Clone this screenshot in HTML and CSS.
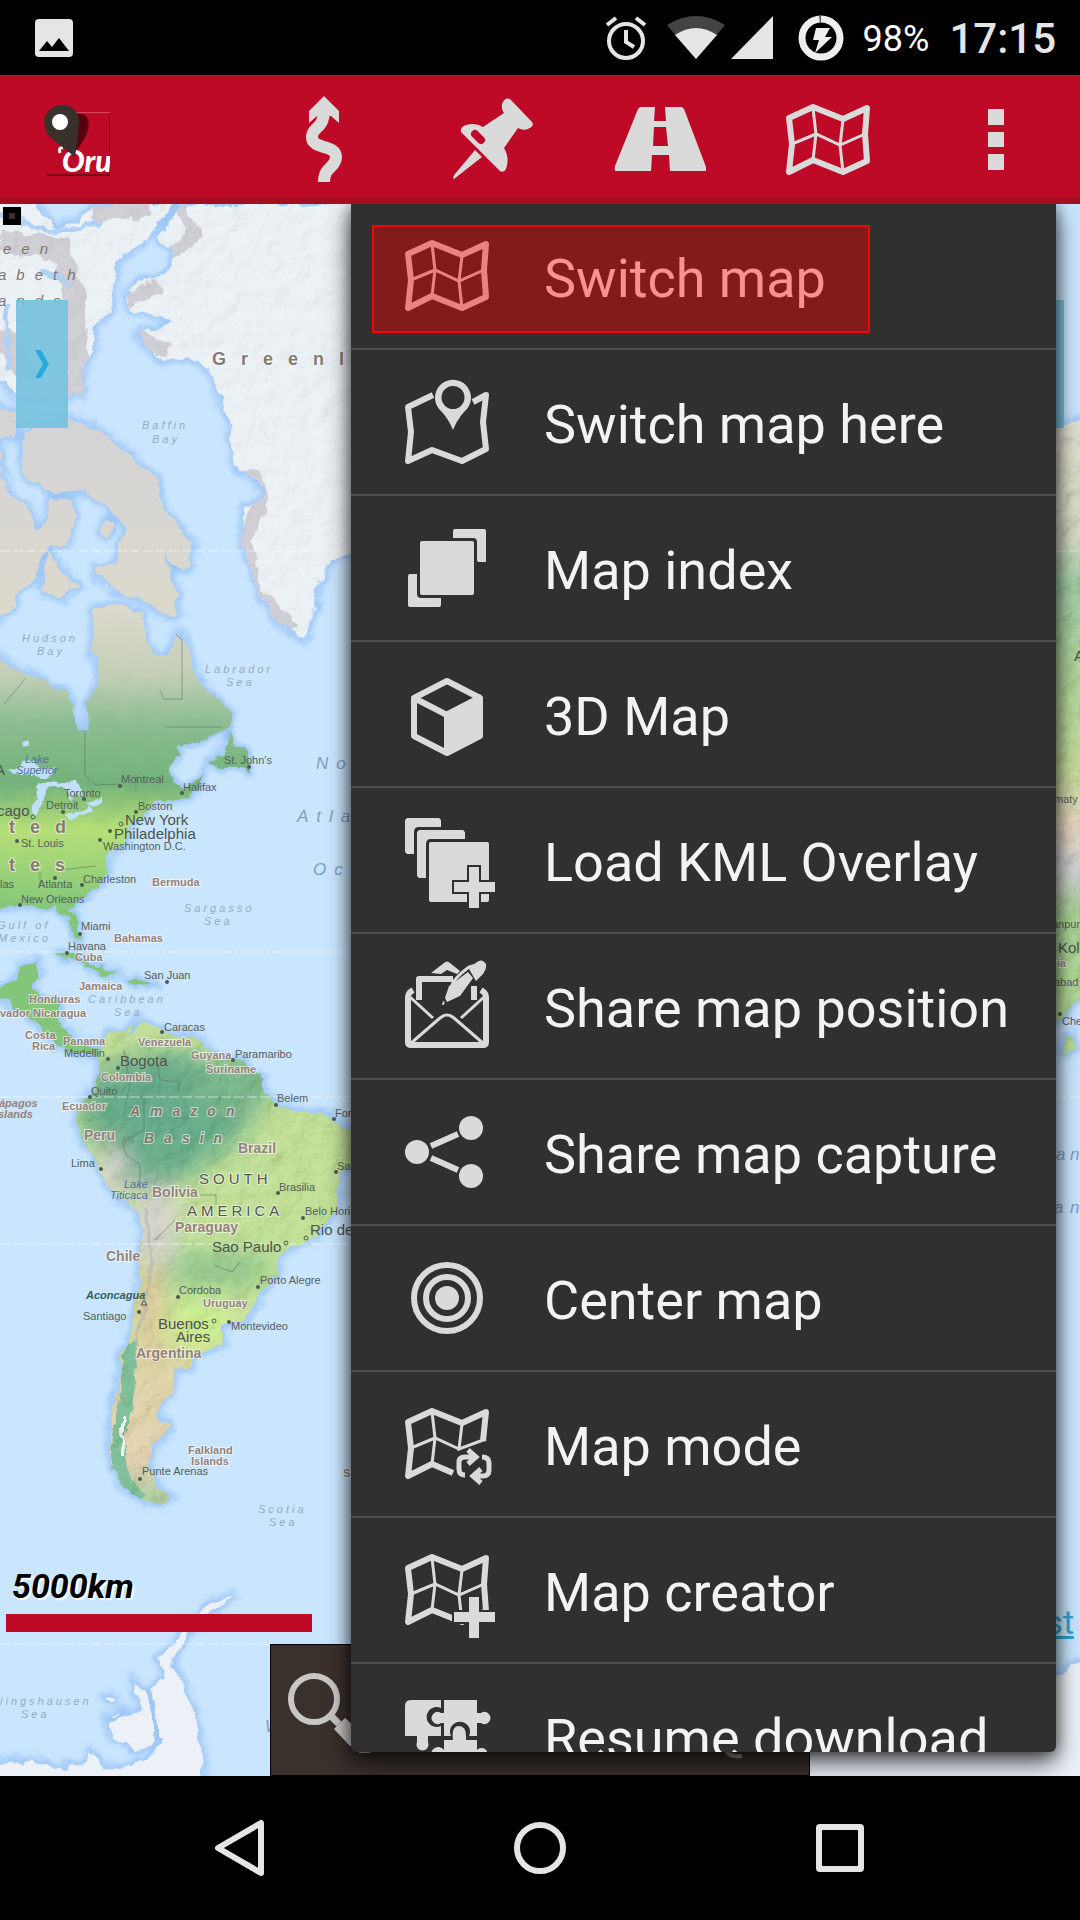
FILE: index.html
```html
<!DOCTYPE html>
<html lang="en">
<head>
<meta charset="utf-8">
<meta name="viewport" content="width=device-width, initial-scale=1">
<title>Map viewer</title>
<link rel="stylesheet" href="styles.css">
</head>
<body>
<svg class="defs" width="0" height="0" aria-hidden="true">
  <symbol id="i-map" viewBox="0 0 96 96">
    <path class="line" d="M9 26 33 15 63 27 87 16 85 42 87 69 63 80 33 68 9 80 12 52Z"/>
    <path class="thin" d="M33 16 36 42 33 68M63 28 60 53 63 80M12 52 36 42 60 53 85 42"/>
  </symbol>
</svg>

<header class="status">
  <svg class="status-photo" width="38" height="38" viewBox="0 0 38 38"><rect width="38" height="38" rx="4" fill="#e5e5e5"/><path d="M4 32 12 22 17 28 24 19 34 32Z" fill="#000"/></svg>
  <div class="status-icons">
    <svg width="42" height="44" viewBox="0 0 42 44"><circle cx="21" cy="25" r="17" fill="none" stroke="#e5e5e5" stroke-width="4"/><path d="M21 14V26L29 31M2 9 11 2M31 2 40 9" fill="none" stroke="#e5e5e5" stroke-width="4"/></svg>
    <svg class="wifi" width="58" height="44" viewBox="0 0 58 44"><path d="M0 9Q29-9 58 9L29 43Z" fill="#444"/><path d="M8 19Q29 5 50 19L29 43Z" fill="#e5e5e5"/></svg>
    <svg class="signal" width="42" height="44" viewBox="0 0 42 44"><path d="M42 0V43H0Z" fill="#e5e5e5"/></svg>
    <svg class="battery" width="46" height="46" viewBox="0 0 46 46"><circle cx="23" cy="23" r="19" fill="none" stroke="#eee" stroke-width="7"/><path d="M21 0H23V8H22Z" fill="#555"/><path d="M18 13H32L27 22H34L17 38 21 25H15Z" fill="#eee"/></svg>
    <span class="percent">98%</span>
    <time class="clock">17:15</time>
  </div>
</header>

<div class="toolbar">
  <svg class="logo" width="72" height="76" viewBox="0 0 72 76" role="img" aria-label="Oru">
    <defs><clipPath id="logoClip"><path d="M0 0H67V73H0Z"/></clipPath></defs>
    <path d="M4 10H67V73H4Z" fill="#be0a26"/><path d="M4 10H67V11H4Z" fill="#d3485b"/><path d="M4 72H67V74H4ZM66 11H67V73H66Z" fill="#7c0719"/>
    <path d="M34 12C50 10 48 30 38 42L32 52Z" fill="#59000f"/>
    <g clip-path="url(#logoClip)"><path d="M17 51Q15 45 20 46" fill="none" stroke="#fff" stroke-width="3"/><text class="logo-text" x="19" y="70">Oru</text></g>
    <path d="M18 3C30 2 37 11 36 22Q35 38 32 55L8 36C-4 24 0 5 18 3Z" fill="#3a302b"/><circle cx="17" cy="20" r="8" fill="#fff"/>
  </svg>
  <div class="tools">
    <button class="tool" aria-label="Tracks"><svg width="96" height="96" viewBox="0 0 96 96"><path class="fill" d="M48 4 63 19V31L55 24H41L33 31V19Z"/><path d="M48 18C48 38 36 34 36 45 36 58 60 52 60 65 60 76 48 74 48 90" fill="none" stroke="#dadada" stroke-width="12"/></svg></button>
    <button class="tool" aria-label="Waypoints"><svg width="96" height="96" viewBox="0 0 96 96"><path class="fill" d="M59 10Q62 4 67 8L88 30Q91 34 84 37 79 39 74 36L60 56Q66 66 62 77 60 81 56 79L17 40Q16 35 22 33 32 30 39 35L60 21Q56 15 59 10ZM31 58 38 65 10 87Q8 86 11 82Z"/><path d="M31 42 37 48" stroke="#be0a26" stroke-width="8" stroke-linecap="round"/></svg></button>
    <button class="tool" aria-label="Routes"><svg width="96" height="96" viewBox="0 0 96 96"><path class="fill" fill-rule="evenodd" d="M28 15H43L42 29H54L53 15H70L72 17 94 75V79H58L57 63H40L39 79H4Q2 79 3 74L26 17ZM42 35H54L56 54H41Z"/></svg></button>
    <button class="tool" aria-label="Maps" aria-expanded="true"><svg width="96" height="96"><use href="#i-map"/></svg></button>
    <button class="tool" aria-label="More"><svg width="96" height="96" viewBox="0 0 96 96"><path class="fill" d="M40 17H56V33H40ZM40 40H56V55H40ZM40 62H56V78H40Z"/></svg></button>
  </div>
</div>

<main class="map">
  <svg class="chart" viewBox="0 204 1080 1572" preserveAspectRatio="xMinYMin slice" aria-hidden="true">
    <defs>
      <filter id="coast" x="-5%" y="-5%" width="110%" height="110%"><feTurbulence type="fractalNoise" baseFrequency=".06" numOctaves="4" seed="4"/><feDisplacementMap in="SourceGraphic" scale="13" xChannelSelector="R" yChannelSelector="G"/></filter>
      <filter id="soft"><feGaussianBlur stdDeviation="12"/></filter>
      <filter id="shore"><feGaussianBlur stdDeviation="3"/></filter>
      <filter id="relief" x="0" y="0" width="100%" height="100%"><feTurbulence type="fractalNoise" baseFrequency=".05" numOctaves="5" seed="8"/><feDiffuseLighting lighting-color="#fff" surfaceScale="5"><feDistantLight azimuth="225" elevation="55"/></feDiffuseLighting></filter>
      <linearGradient id="north" gradientUnits="userSpaceOnUse" x1="0" y1="440" x2="0" y2="910">
        <stop offset="0" stop-color="#d5d4d5"/><stop offset=".36" stop-color="#dbd9cc"/><stop offset=".5" stop-color="#c4cfb6"/><stop offset=".6" stop-color="#8dbd92"/><stop offset=".73" stop-color="#73b27b"/><stop offset=".83" stop-color="#b5df77"/><stop offset="1" stop-color="#83c67a"/>
      </linearGradient>
      <linearGradient id="south" gradientUnits="userSpaceOnUse" x1="0" y1="1020" x2="0" y2="1510">
        <stop offset="0" stop-color="#b9db83"/><stop offset=".5" stop-color="#b7de83"/><stop offset=".62" stop-color="#c4e184"/><stop offset=".72" stop-color="#d9cd96"/><stop offset=".9" stop-color="#e2cba4"/><stop offset="1" stop-color="#8fc68a"/>
      </linearGradient>
      <linearGradient id="asia" gradientUnits="userSpaceOnUse" x1="0" y1="420" x2="0" y2="1010">
        <stop offset="0" stop-color="#dcd8c8"/><stop offset=".2" stop-color="#cad1b4"/><stop offset=".27" stop-color="#8ec493"/><stop offset=".45" stop-color="#9fce80"/><stop offset=".6" stop-color="#bcd787"/><stop offset=".68" stop-color="#e3cfae"/><stop offset=".76" stop-color="#c9c8cc"/><stop offset=".84" stop-color="#94ca7c"/><stop offset="1" stop-color="#a2d57d"/>
      </linearGradient>
      <g id="landNorth">
        <path d="M0 465 10 495 28 505 37 532 46 520 50 496 72 500 74 525 68 545 50 545 40 555 35 580 20 590 10 610-9 622V404L16 410V438L0 440Z"/>
        <path d="M24 430 70 418 100 430 125 450 155 480 160 500 175 525 194 545 190 565 178 570 163 550 175 590 178 614 165 615 140 600 115 590 95 575 95 567 115 562 120 548 128 530 115 515 90 495 75 490 40 490 22 470Z"/>
        <path d="M48 550 65 575 80 588 60 598 42 590ZM100 528 108 518 114 526 108 537 100 536Z"/>
        <path d="M93 608 120 605 142 615 146 640 155 655 168 655 175 640 180 632 190 660 200 685 222 700 232 715 228 728 215 735 195 742 177 745 178 757 168 770 172 785 185 790 202 775 200 787 180 800 160 802 145 810 136 820 125 835 115 850 107 862 108 875 95 890 80 900 68 910 78 922 80 937 74 932 65 912 55 905 35 908 20 905-10 910V650L8 668 35 675 55 690 68 690 72 715 80 732 88 728 86 700 98 690 100 670 92 650Z"/>
        <path d="M229 732 222 750 210 766 240 768 250 770 248 752 235 745ZM56 955 75 952 95 965 117 972 100 973 80 961ZM124 980 138 977 152 984 134 986Z"/>
        <path d="M-9 990 17 980 20 967 38 961 38 975 32 985 45 998 60 1000 58 1010 60 1025 75 1040 90 1042 100 1050 98 1056 85 1056 70 1050 55 1045 40 1025 20 1010-9 995Z"/>
      </g>
      <path id="landSouth" d="M98 1060 102 1045 110 1035 125 1028 134 1021 128 1036 145 1025 165 1032 185 1035 200 1040 215 1055 240 1062 255 1072 262 1085 272 1098 285 1108 310 1112 330 1117 347 1128 370 1132 366 1155 345 1170 338 1190 335 1210 325 1225 312 1240 295 1245 280 1258 275 1275 262 1292 250 1310 242 1322 228 1322 220 1325 225 1335 220 1345 205 1352 192 1358 190 1368 175 1370 172 1390 160 1405 158 1415 168 1425 165 1435 152 1450 148 1465 150 1475 155 1485 172 1497 160 1505 145 1500 130 1492 120 1482 112 1460 110 1440 112 1425 110 1415 118 1395 120 1375 122 1350 130 1330 137 1300 140 1270 142 1230 138 1210 115 1195 102 1175 88 1150 82 1135 74 1125 76 1110 88 1095 98 1075Z"/>
      <path id="greenland" d="M181 204 160 240 173 250 175 262 165 275 130 287 126 300 135 312 160 315 171 325 138 334 150 350 165 360 190 355 208 368 220 395 228 415 230 440 235 465 250 475 262 485 262 500 245 510 242 540 250 565 265 600 280 625 305 638 312 625 315 590 325 565 360 545 400 530V204Z"/>
      <path id="ellesmere" d="M-9 200H30L58 230 100 204H174L150 235 128 252 115 262 114 290 108 312 92 330 96 345 84 358 82 395 60 400 15 395-9 370Z"/>
      <g id="landIce">
        <use href="#greenland"/><use href="#ellesmere"/>
        <path d="M-9 1766 15 1758 20 1768 28 1758 46 1765 66 1768 80 1766 90 1752 100 1765 120 1770 150 1760 160 1745 160 1720 152 1690 165 1680 160 1660 175 1640 200 1612 235 1594 215 1610 192 1628 178 1650 170 1665 185 1685 195 1720 202 1750 200 1790H-9Z"/>
        <path d="M133 1682 145 1690 155 1720 150 1745 135 1752 128 1742 110 1735 110 1724 140 1710ZM106 1697 116 1698 112 1703ZM110 1716 120 1713 116 1718Z"/>
        <path d="M800 1740 1040 1700 1056 1673 1090 1660V1790H800Z"/>
      </g>
      <path id="landAsia" d="M1040 420 1064 424 1090 418V992L1076 1000 1062 1018 1040 1030ZM1066 1036 1072 1036 1075 1052 1064 1054Z"/>
      <clipPath id="inNorth"><use href="#landNorth"/></clipPath>
      <clipPath id="inSouth"><use href="#landSouth"/></clipPath>
      <clipPath id="inAsia"><use href="#landAsia"/></clipPath>
      <clipPath id="inIce"><use href="#greenland"/><use href="#ellesmere"/></clipPath>
    </defs>

    <rect y="204" width="1080" height="1572" fill="#cae6fe"/>
    <g filter="url(#coast)">
      <g filter="url(#shore)" fill="none" stroke="#9cc6f7" stroke-width="8"><use href="#landNorth"/><use href="#landSouth"/><use href="#landIce"/><use href="#landAsia"/></g>
      <use href="#landNorth" fill="url(#north)"/>
      <use href="#landSouth" fill="url(#south)"/>
      <use href="#landAsia" fill="url(#asia)"/>
      <use href="#landIce" fill="#ebf1f7"/>
      <g clip-path="url(#inNorth)">
        <g filter="url(#soft)"><ellipse cx="40" cy="748" rx="90" ry="34" fill="#5fa878"/><ellipse cx="150" cy="765" rx="50" ry="26" fill="#65ab78"/><ellipse cx="10" cy="840" rx="60" ry="30" fill="#c8ea75"/><ellipse cx="95" cy="855" rx="16" ry="38" fill="#74bb73"/><ellipse cx="125" cy="640" rx="34" ry="34" fill="#dcd7c8"/><ellipse cx="182" cy="670" rx="16" ry="30" fill="#d3d2bb"/></g>
        <rect y="404" width="360" height="660" filter="url(#relief)" opacity=".22"/>
      </g>
      <g clip-path="url(#inSouth)">
        <g filter="url(#soft)"><ellipse cx="165" cy="1110" rx="85" ry="58" fill="#479c72"/><ellipse cx="150" cy="1160" rx="50" ry="28" fill="#4b9f74"/><ellipse cx="235" cy="1085" rx="42" ry="30" fill="#5eaa76"/><ellipse cx="218" cy="1270" rx="55" ry="20" fill="#7fbf78"/><ellipse cx="200" cy="1325" rx="34" ry="26" fill="#c4ed79"/><ellipse cx="155" cy="1225" rx="22" ry="42" fill="#d0cccb"/><ellipse cx="112" cy="1175" rx="14" ry="30" fill="#d6d0cd"/><ellipse cx="150" cy="1310" rx="13" ry="52" fill="#ddb98d"/></g>
        <path d="M132 1340 126 1400 118 1440 122 1480 142 1498" fill="none" stroke="#67b486" stroke-width="14"/>
        <path d="M123 1418V1434L122 1456" fill="none" stroke="#f3f3ef" stroke-width="4"/>
        <path d="M146 1210 152 1260 144 1310 136 1350" fill="none" stroke="#a6a3a4" stroke-width="3" opacity=".6"/>
        <rect y="1010" width="370" height="510" filter="url(#relief)" opacity=".2"/>
      </g>
      <g clip-path="url(#inAsia)"><rect x="1040" y="404" width="40" height="660" filter="url(#relief)" opacity=".25"/></g>
      <g clip-path="url(#inIce)">
        <g fill="none" stroke="#cdcbd3" stroke-width="14"><path d="M178 204 195 236 166 256M160 285 128 300M136 338 168 350M250 470 262 500 246 540 256 590 290 630"/><path stroke-width="22" d="M0 240 60 250 76 300 78 400M0 330 30 380M92 210 150 204"/></g>
        <g fill="none" stroke="#a9d0fa" stroke-width="5"><path d="M0 214 50 232 100 222M40 270 74 286M8 300V370"/></g>
        <rect y="204" width="360" height="450" filter="url(#relief)" opacity=".1"/>
      </g>
      <g fill="#c1e0fb"><path d="M10 772 30 760 54 770 48 776 22 775ZM24 744 30 740 32 748 26 750ZM36 786 46 781 76 783 84 796 72 800 60 785 44 790 40 815 33 818ZM64 815 88 806 92 809 72 819ZM84 803 104 798 104 803 88 806Z"/></g>
    </g>
    <g class="border"><path d="M26 678 4 704M85 730V775L96 785 120 784M160 690 164 699H182V640L176 634M165 727H222M136 775V790M124 1050 130 1085 124 1110M157 1062 160 1080 180 1082 178 1092M144 1092V1130L122 1142 126 1155 140 1165V1190M200 1195H216V1204M155 1240 175 1220M214 1265 232 1272 240 1262M60 870 96 866M40 872V885"/></g>
    <g class="graticule"><path d="M0 551H351M0 952H351M0 1097H351M0 1244H351M0 1644H270M1056 551H1080M1056 1097H1080"/></g>

    <g class="sea">
      <text x="142" y="429">Baffin</text><text x="152" y="443">Bay</text><text x="22" y="642">Hudson</text><text x="37" y="655">Bay</text><text x="205" y="673">Labrador</text><text x="226" y="686">Sea</text><text x="184" y="912">Sargasso</text><text x="204" y="925">Sea</text><text x="-3" y="929">Gulf of</text><text x="-2" y="942">Mexico</text><text x="88" y="1003">Caribbean</text><text x="114" y="1016">Sea</text><text x="258" y="1513">Scotia</text><text x="269" y="1526">Sea</text><text x="0" y="1705">lingshausen</text><text x="21" y="1718">Sea</text>
    </g>
    <g class="ocean"><text x="316" y="769">No</text><text x="297" y="822">Atla</text><text x="313" y="875">Oc</text><text x="265" y="1732">W</text><text x="1056" y="1160">a</text><text x="1070" y="1160">n</text><text x="1054" y="1213">a</text><text x="1070" y="1213">n</text></g>
    <g class="lake"><text x="25" y="763">Lake</text><text x="16" y="774">Superior</text><text x="124" y="1188">Lake</text><text x="110" y="1199">Titicaca</text></g>
    <g class="region halo"><text x="212" y="365">Greenl</text><text x="9" y="833">ted</text><text x="9" y="871">tes</text></g>
    <g class="isles"><text x="3" y="254">een</text><text x="-2" y="280">abeth</text><text x="-2" y="306">ands</text></g>
    <g class="basin halo"><text x="130" y="1116">Amazon</text><text x="144" y="1143">Basin</text></g>
    <g class="continent halo"><text x="199" y="1184">SOUTH</text><text x="187" y="1216">AMERICA</text></g>
    <g class="city">
      <text x="224" y="764">St. John's</text><text x="121" y="783">Montreal</text><text x="183" y="791">Halifax</text><text x="64" y="797">Toronto</text><text x="46" y="809">Detroit</text><text x="138" y="810">Boston</text><text x="103" y="850">Washington D.C.</text><text x="21" y="847">St. Louis</text><text x="83" y="883">Charleston</text><text x="38" y="888">Atlanta</text><text x="0" y="888">las</text><text x="21" y="903">New Orleans</text><text x="81" y="930">Miami</text><text x="68" y="950">Havana</text><text x="144" y="979">San Juan</text><text x="164" y="1031">Caracas</text><text x="64" y="1057">Medellin</text><text x="235" y="1058">Paramaribo</text><text x="91" y="1095">Quito</text><text x="277" y="1102">Belem</text><text x="335" y="1117">Fortaleza</text><text x="71" y="1167">Lima</text><text x="337" y="1170">Salvador</text><text x="279" y="1191">Brasilia</text><text x="305" y="1215">Belo Hori</text><text x="260" y="1284">Porto Alegre</text><text x="179" y="1294">Cordoba</text><text x="83" y="1320">Santiago</text><text x="231" y="1330">Montevideo</text><text x="142" y="1475">Punte Arenas</text><text x="1054" y="803">maty</text><text x="1052" y="928">anpur</text><text x="1054" y="986">abad</text><text x="1062" y="1025">Che</text>
    </g>
    <g class="city large"><text x="-3" y="816">cago</text><text x="125" y="825">New York</text><text x="114" y="839">Philadelphia</text><text x="120" y="1066">Bogota</text><text x="310" y="1235">Rio de</text><text x="212" y="1252">Sao Paulo</text><text x="158" y="1329">Buenos</text><text x="176" y="1342">Aires</text><text x="-5" y="775">A</text><text x="1074" y="661">A</text><text x="1058" y="953">Kol</text></g>
    <g class="country halo"><text x="152" y="886">Bermuda</text><text x="114" y="942">Bahamas</text><text x="75" y="961">Cuba</text><text x="79" y="990">Jamaica</text><text x="29" y="1003">Honduras</text><text x="0" y="1017">vador Nicaragua</text><text x="25" y="1039">Costa</text><text x="32" y="1050">Rica</text><text x="63" y="1045">Panama</text><text x="138" y="1046">Venezuela</text><text x="191" y="1059">Guyana</text><text x="206" y="1073">Suriname</text><text x="101" y="1081">Colombia</text><text x="62" y="1110">Ecuador</text><text x="188" y="1454">Falkland</text><text x="191" y="1465">Islands</text><text x="203" y="1307">Uruguay</text><text x="343" y="1477">S</text><text x="1057" y="967">ia</text></g>
    <g class="country slant"><text x="-1" y="1107">ápagos</text><text x="-2" y="1118">slands</text></g>
    <g class="country big halo"><text x="84" y="1140">Peru</text><text x="238" y="1153">Brazil</text><text x="152" y="1197">Bolivia</text><text x="175" y="1232">Paraguay</text><text x="106" y="1261">Chile</text><text x="136" y="1358">Argentina</text></g>
    <text class="peak" x="86" y="1299">Aconcagua</text>
    <g fill="#4d5a50"><circle cx="249" cy="767" r="2"/><circle cx="120" cy="786" r="2"/><circle cx="182" cy="793" r="2"/><circle cx="84" cy="799" r="2"/><circle cx="63" cy="812" r="2"/><circle cx="136" cy="812" r="2"/><circle cx="110" cy="831" r="2"/><circle cx="100" cy="840" r="2"/><circle cx="17" cy="841" r="2"/><circle cx="55" cy="878" r="2"/><circle cx="82" cy="885" r="2"/><circle cx="20" cy="905" r="2"/><circle cx="80" cy="934" r="2"/><circle cx="67" cy="953" r="2"/><circle cx="167" cy="982" r="2"/><circle cx="162" cy="1032" r="2"/><circle cx="108" cy="1059" r="2"/><circle cx="118" cy="1068" r="2"/><circle cx="233" cy="1060" r="2"/><circle cx="90" cy="1097" r="2"/><circle cx="276" cy="1105" r="2"/><circle cx="334" cy="1119" r="2"/><circle cx="101" cy="1169" r="2"/><circle cx="336" cy="1172" r="2"/><circle cx="278" cy="1193" r="2"/><circle cx="303" cy="1218" r="2"/><circle cx="258" cy="1287" r="2"/><circle cx="178" cy="1297" r="2"/><circle cx="139" cy="1312" r="2"/><circle cx="229" cy="1322" r="2"/><circle cx="140" cy="1479" r="2"/><circle cx="1060" cy="1014" r="2"/></g>
    <g fill="none" stroke="#4d5a50"><circle cx="33" cy="817" r="2"/><circle cx="121" cy="824" r="2"/><circle cx="286" cy="1243" r="2"/><circle cx="306" cy="1238" r="2"/><circle cx="214" cy="1321" r="2"/><path d="M141 1305 144 1300 147 1305Z"/></g>
  </svg>

  <span class="corner"></span>
  <button class="handle handle-left" aria-label="Open left panel"><svg width="16" height="28" viewBox="0 0 16 28"><path d="M1 0H7L15 14 7 28H1L9 14Z" fill="#29aade"/></svg></button>
  <button class="handle handle-right" aria-label="Open right panel"></button>

  <div class="scale"><span>5000km</span><div class="scale-bar"></div></div>
  <a class="credit" href="#credit">st</a>

  <div class="panel">
    <button class="search" aria-label="Search"><svg width="96" height="96" viewBox="0 0 96 96"><circle cx="31" cy="42" r="23" fill="none" stroke="#c9c7c5" stroke-width="6"/><path d="M47 58 56 67" stroke="#c9c7c5" stroke-width="7"/><path d="M51 72 62 61 78 75 92 92 82 100 66 88Z" fill="#c9c7c5"/></svg></button>
    <svg class="panel-mark" width="24" height="24" viewBox="0 0 24 24"><path d="M3 8Q5 21 21 19" fill="none" stroke="#9a9592" stroke-width="4"/></svg>
  </div>

  <nav class="menu" aria-label="Map options">
    <button class="item selected"><svg width="96" height="96"><use href="#i-map"/></svg><span>Switch map</span></button>
    <button class="item"><svg width="96" height="96" viewBox="0 0 96 96"><path class="line" d="M34 21 9 33 12 58 9 87 33 76 63 87 87 75 84 48 87 21 74 28"/><path class="fill" fill-rule="evenodd" d="M54 56Q50 46 43 38A18 18 0 1 1 65 38Q58 46 54 56ZM54 12A11 11 0 1 0 54 35 11 11 0 1 0 54 12Z"/></svg><span>Switch map here</span></button>
    <button class="item"><svg width="96" height="96" viewBox="0 0 96 96"><rect class="fill" x="21" y="21" width="54" height="54" rx="2"/><path class="fill" d="M56 9H85Q87 9 87 11V42H80Q78 42 78 40V22Q78 18 74 18H54V11Q54 9 56 9ZM11 54H18V74Q18 78 22 78H42V85Q42 87 40 87H11Q9 87 9 85V56Q9 54 11 54Z"/></svg><span>Map index</span></button>
    <button class="item"><svg width="96" height="96" viewBox="0 0 96 96"><path class="line" d="M48 15 81 32V70L48 87 15 70V32ZM15 32 48 49"/><path class="fill" d="M48 45 81 28 84 32V71L48 90 45 88V47Z"/></svg><span>3D Map</span></button>
    <button class="item"><svg width="96" height="96" viewBox="0 0 96 96"><path class="fill" d="M8 6H40L42 8V15H20Q15 15 15 20V42H8L6 40V8ZM20 18H64L66 20V27H32Q27 27 27 32V66H20L18 64V20Z"/><rect class="fill" x="30" y="30" width="60" height="60" rx="2"/><path class="fill cut" d="M69 54H81V69H98V81H81V98H69V81H54V69H69Z"/></svg><span>Load KML Overlay</span></button>
    <button class="item"><svg width="96" height="96" viewBox="0 0 96 96"><path class="line" d="M14 32Q9 35 9 39V84Q9 87 12 87H84Q87 87 87 84V39Q87 35 82 32M20 42V21H54"/><path d="M75 28V42" fill="none" stroke="#dadada" stroke-width="6"/><path class="thin" d="M11 39 34 60M85 39 62 60M11 86 41 60Q48 54 55 60L85 86"/><path class="fill" d="M32 15 45 5Q48 2 51 5L61 13 58 16 48 12 42 16ZM44 43A2 2 0 1 1 43 47ZM46 40 50 28 69 14 74 20 61 38 48 44ZM70 11 78 4Q83 0 87 6 88 10 84 16L77 23Z"/><path class="thin" d="M53 28Q54 21 70 9L77 7"/></svg><span>Share map position</span></button>
    <button class="item"><svg width="96" height="96" viewBox="0 0 96 96"><circle class="fill" cx="18" cy="48" r="12"/><circle class="fill" cx="72" cy="24" r="12"/><circle class="fill" cx="72" cy="72" r="12"/><path class="line" d="M32 42 59 30M32 54 59 66"/></svg><span>Share map capture</span></button>
    <button class="item"><svg width="96" height="96" viewBox="0 0 96 96"><circle class="line" cx="48" cy="48" r="33"/><circle class="line" cx="48" cy="48" r="21"/><circle class="fill" cx="48" cy="48" r="12"/></svg><span>Center map</span></button>
    <button class="item"><svg width="96" height="96" viewBox="0 0 96 96"><path class="line" d="M54 77 33 68 9 80 12 52 9 26 33 15 63 27 87 16 84 45"/><path class="thin" d="M33 16 36 42 33 68M63 28 60 53 87 43M12 52 36 42 60 53"/><path d="M66 79Q60 79 60 73V66Q60 61 66 61H76M69 54 77 61 69 68M83 61Q90 61 90 67V74Q90 80 84 80H74M82 73 74 80 82 87" fill="none" stroke="#dadada" stroke-width="5"/></svg><span>Map mode</span></button>
    <button class="item"><svg width="96" height="96" viewBox="0 0 96 96"><use href="#i-map"/><path fill="#303030" d="M54 83H70V96H54ZM81 83H92V68H82Z"/><path class="fill cut" d="M69 54H81V69H98V81H81V98H69V81H54V69H69Z"/></svg><span>Map creator</span></button>
    <button class="item"><svg width="96" height="96" viewBox="0 0 96 96"><path class="fill" d="M12 12H42V20A10 10 0 1 0 42 38V48H29V54A6 6 0 1 1 18 54V48H6V18Q6 12 12 12ZM45 12H78V25H82A6 6 0 1 1 82 35H78V48H70A10 10 0 1 0 52 48H45V35H42A6 6 0 1 1 42 25H45ZM45 52H54Q52 38 60 38T67 52H78V62A6 6 0 1 1 82 72H78V86H45V70A7 7 0 1 1 45 62Z"/></svg><span>Resume download</span></button>
  </nav>
</main>

<footer class="nav">
  <button aria-label="Back"><svg width="60" height="60" viewBox="0 0 60 60"><path d="M8 30 51 5V55Z"/></svg></button>
  <button aria-label="Home"><svg width="60" height="60" viewBox="0 0 60 60"><circle cx="30" cy="30" r="23"/></svg></button>
  <button aria-label="Recent apps"><svg width="60" height="60" viewBox="0 0 60 60"><rect x="9" y="9" width="42" height="42" rx="1"/></svg></button>
</footer>
</body>
</html>
```
FILE: styles.css
```css
*, ::after { box-sizing: border-box; }

body {
  margin: 0;
  height: 100vh;
  display: flex;
  flex-direction: column;
  background: #000;
  font-family: Roboto, "Liberation Sans", sans-serif;
  overflow: hidden;
}

button {
  margin: 0;
  padding: 0;
  border: 0;
  background: none;
  font: inherit;
  color: inherit;
}

svg { display: block; flex: none; }
.defs { position: absolute; }

/* shared icon strokes */
.fill { fill: #dadada; }
.line { fill: none; stroke: #dadada; stroke-width: 6; stroke-linejoin: round; }
.thin { fill: none; stroke: #dadada; stroke-width: 3; }
.cut { stroke: #303030; stroke-width: 2; }

/* status bar */
.status {
  flex: none;
  height: 75px;
  padding: 0 24px 0 35px;
  display: flex;
  align-items: center;
  justify-content: space-between;
  background: #000;
  color: #e5e5e5;
}
.status-icons { display: flex; align-items: center; }
.wifi { margin-left: 20px; }
.signal { margin-left: 6px; }
.battery { margin-left: 25px; }
.percent { margin-left: 19px; padding-top: 2px; font-size: 36px; line-height: 44px; color: #fff; }
.clock { margin-left: 20px; padding-top: 2px; font-size: 42px; line-height: 44px; font-weight: 500; }

/* toolbar */
.toolbar {
  flex: none;
  height: 129px;
  padding-left: 43px;
  display: flex;
  align-items: center;
  justify-content: space-between;
  background: linear-gradient(#be0a26 120px, #a30e20 124px);
}
.logo-text { font: italic 900 30px Lato, sans-serif; fill: #fff; }
.tools { display: flex; }
.tool { width: 168px; display: flex; justify-content: center; }

/* map */
.map {
  position: relative;
  flex: 1;
  min-height: 0;
  overflow: hidden;
}
.chart { position: absolute; top: 0; left: 0; width: 100%; height: 100%; }
.chart text { font-family: "Liberation Sans", Arial, sans-serif; }
.border { fill: none; stroke: #4f6b5a; stroke-width: 1; opacity: .5; }
.graticule { fill: none; stroke: #fff; stroke-width: 1; stroke-dasharray: 10 3; opacity: .6; }
.halo { paint-order: stroke; stroke: #ffffff99; stroke-width: 2; }
.sea { font-size: 11px; font-style: italic; letter-spacing: 3px; fill: #94aac4; }
.ocean { font-size: 17px; font-style: italic; letter-spacing: 8px; fill: #7f9cc4; }
.lake { font-size: 11px; font-style: italic; fill: #4f70a0; }
.region { font-size: 18px; font-weight: 700; letter-spacing: 15px; fill: #877a72; }
.isles { font-size: 15px; font-style: italic; letter-spacing: 10px; fill: #80756c; }
.basin { font-size: 14px; font-style: italic; font-weight: 700; letter-spacing: 10px; fill: #7d7a6c; }
.continent { font-size: 15px; letter-spacing: 4px; fill: #555; }
.city { font-size: 11px; fill: #53605c; }
.city.large { font-size: 15px; fill: #4c5450; }
.country { font-size: 11px; font-weight: 700; fill: #94827a; }
.country.slant { font-style: italic; }
.country.big { font-size: 14px; }
.peak { font-size: 11px; font-style: italic; font-weight: 700; fill: #33605c; }

.corner {
  position: absolute;
  top: 3px;
  left: 3px;
  width: 18px;
  height: 18px;
  border: 6px solid #000;
  background: #3a302b;
}
.handle {
  position: absolute;
  top: 96px;
  width: 52px;
  height: 128px;
  display: flex;
  align-items: center;
  justify-content: center;
  background: #78c2deee;
}
.handle-left { left: 16px; }
.handle-right { right: 16px; }

.scale {
  position: absolute;
  left: 6px;
  bottom: 144px;
  width: 306px;
  color: #000;
  font-size: 34px;
  line-height: 40px;
  font-weight: 700;
  font-style: italic;
  text-shadow: 2px 2px 1px #fff;
}
.scale span { padding-left: 6px; }
.scale-bar { height: 18px; margin-top: 8px; background: #be0a26; }

.credit {
  position: absolute;
  right: 6px;
  bottom: 134px;
  font-size: 34px;
  line-height: 40px;
  color: #2ba6d3;
}

.panel {
  position: absolute;
  left: 25%;
  right: 25%;
  bottom: 0;
  height: 132px;
  border: 1px solid #000;
  background: #3a302c;
}
.search { display: flex; padding: 12px; }
.panel-mark { position: absolute; right: 64px; bottom: 14px; }

/* drop-down menu */
.menu {
  position: absolute;
  top: 0;
  right: 24px;
  bottom: 24px;
  width: 705px;
  overflow: hidden;
  border-radius: 0 0 6px 6px;
  background: #303030;
  color: #f3f3f3;
  box-shadow: 0 10px 24px #000000b3, 0 0 14px #00000066;
}
.item {
  position: relative;
  width: 100%;
  height: 146px;
  padding: 0 48px;
  display: flex;
  align-items: center;
  gap: 49px;
  border-bottom: 2px solid #4d4d4d;
  font-size: 54px;
  line-height: 64px;
  text-align: left;
  white-space: nowrap;
}
.item span { padding-top: 6px; }
.selected::after {
  content: "";
  position: absolute;
  top: 21px;
  left: 21px;
  width: 498px;
  height: 108px;
  border: 2px solid #f00;
  background: #ff000066;
}

/* system navigation */
.nav {
  flex: none;
  height: 144px;
  padding: 0 90px;
  display: flex;
  background: #000;
}
.nav button { flex: 1; display: flex; align-items: center; justify-content: center; }
.nav svg { fill: none; stroke: #e5e5e5; stroke-width: 6; stroke-linejoin: round; }
```
